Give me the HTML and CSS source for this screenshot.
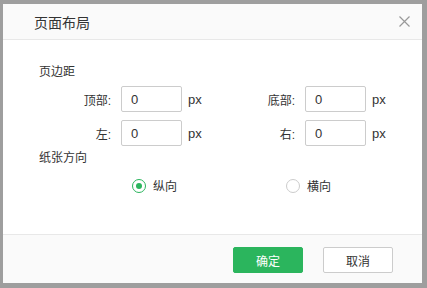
FILE: index.html
```html
<!DOCTYPE html>
<html lang="zh-CN">
<head>
  <meta charset="UTF-8">
  <title>页面布局</title>
  <link rel="stylesheet" href="styles.css">
</head>
<body>

<!-- 页面布局 dialog -->
<div class="dialog">
  <div class="dialog-header">
    <span class="dialog-title">页面布局</span>
    <span class="close">
      <svg width="11" height="11" viewBox="0 0 11 11"><path d="M0.5 0.5 L10.5 10.5 M10.5 0.5 L0.5 10.5" stroke="#999" stroke-width="1.2" fill="none"/></svg>
    </span>
  </div>

  <div class="dialog-body">
    <div class="section-title">页边距</div>
    <div class="fields">
      <div class="field">
        <label>顶部:</label>
        <input type="text" value="0">
        <span class="unit">px</span>
      </div>
      <div class="field">
        <label>底部:</label>
        <input type="text" value="0">
        <span class="unit">px</span>
      </div>
      <div class="field">
        <label>左:</label>
        <input type="text" value="0">
        <span class="unit">px</span>
      </div>
      <div class="field">
        <label>右:</label>
        <input type="text" value="0">
        <span class="unit">px</span>
      </div>
    </div>

    <div class="section-title orient-title">纸张方向</div>
    <div class="radios">
      <div class="radio checked"><span class="dot"></span>纵向</div>
      <div class="radio"><span class="dot"></span>横向</div>
    </div>
  </div>

  <div class="dialog-footer">
    <button class="btn btn-primary">确定</button>
    <button class="btn">取消</button>
  </div>
</div>

</body>
</html>
```

FILE: styles.css
```css
* {
  box-sizing: border-box;
}
body {
  margin: 0;
  padding: 4px 0 0 3px;
  width: 427px;
  height: 288px;
  overflow: hidden;
  background: #9e9e9e;
  font-family: "Liberation Sans", "Noto Sans CJK SC", sans-serif;
  color: #333;
}
.dialog {
  width: 419px;
  height: 279px;
  background: #fff;
  display: flex;
  flex-direction: column;
}
.dialog-header {
  height: 36px;
  background: #fafafa;
  border-bottom: 1px solid #e8e8e8;
  display: flex;
  align-items: center;
  justify-content: space-between;
  padding: 0 12px 0 31px;
}
.dialog-title {
  font-size: 14px;
  color: #333;
}
.close {
  display: flex;
}
.dialog-body {
  flex: 1;
  padding: 24px 0 0 36px;
}
.section-title {
  font-size: 12px;
  line-height: 17px;
}
.fields {
  display: grid;
  grid-template-columns: 184px 184px;
  row-gap: 8px;
  margin-top: 5px;
}
.field {
  display: flex;
  align-items: center;
  font-size: 12px;
}
.field label {
  width: 72px;
  text-align: right;
  margin-right: 10px;
}
.field input {
  width: 61px;
  height: 26px;
  border: 1px solid #ccc;
  border-radius: 2px;
  padding: 0 9px;
  font-size: 13px;
  font-family: "Liberation Sans", sans-serif;
  color: #333;
}
.unit {
  margin-left: 6px;
  font-size: 13px;
}
.orient-title {
  margin-top: 4px;
}
.radios {
  display: flex;
  margin: 10px 0 0 93px;
  font-size: 12px;
}
.radio {
  width: 154px;
  flex-shrink: 0;
  display: flex;
  align-items: center;
}
.dot {
  width: 14px;
  height: 14px;
  border: 1px solid #ccc;
  border-radius: 50%;
  margin-right: 7px;
  position: relative;
}
.radio.checked .dot {
  border-color: #2bb55d;
}
.radio.checked .dot::after {
  content: "";
  position: absolute;
  left: 3px;
  top: 3px;
  width: 6px;
  height: 6px;
  border-radius: 50%;
  background: #2bb55d;
}
.dialog-footer {
  height: 49px;
  background: #fafafa;
  border-top: 1px solid #e8e8e8;
  display: flex;
  justify-content: flex-end;
  align-items: flex-start;
  gap: 20px;
  padding: 12px 29px 0 0;
}
.btn {
  width: 70px;
  height: 26px;
  border: 1px solid #ccc;
  border-radius: 2px;
  background: #fff;
  font-size: 12px;
  font-family: "Liberation Sans", "Noto Sans CJK SC", sans-serif;
  color: #333;
  cursor: pointer;
}
.btn-primary {
  background: #2bb55d;
  border-color: #2bb55d;
  color: #fff;
}
```
